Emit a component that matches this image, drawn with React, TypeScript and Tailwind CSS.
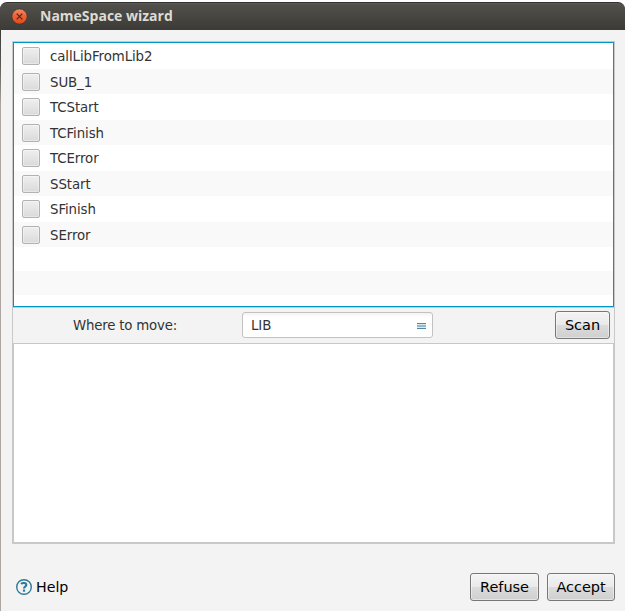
const rows = [
  { label: 'callLibFromLib2', size: 'h-[26px]' },
  { label: 'SUB_1', size: 'h-[25px]' },
  { label: 'TCStart', size: 'h-[26px]' },
  { label: 'TCFinish', size: 'h-[25px]' },
  { label: 'TCError', size: 'h-[26px]' },
  { label: 'SStart', size: 'h-[25px]' },
  { label: 'SFinish', size: 'h-[26px]' },
  { label: 'SError', size: 'h-[25px]' },
];

function PushButton({ label, width }: { label: string; width: string }) {
  return (
    <button
      className={`${width} h-7 shrink-0 rounded-[3px] border border-[#777] bg-[linear-gradient(#f4f4f4,#eaeaea_48%,#dcdcdc_50%,#cfcfcf)] text-center text-[14.5px] leading-[26px] tracking-[-0.05px] text-black shadow-[inset_0_0_0_1px_#ffffff70]`}
    >
      {label}
    </button>
  );
}

export default function App() {
  return (
    <div className="h-[611px] w-[625px] overflow-hidden bg-white pt-[2px] font-['DejaVu_Sans',sans-serif]">
      <div className="flex h-[28px] items-center rounded-t-[7px] border-t border-[#34332f] bg-[linear-gradient(#5b5a53_0,#504f49_2px,#3c3b37)] pl-[11px]">
        <svg width="17" height="17" viewBox="0 0 17 17" className="shrink-0">
          <defs>
            <linearGradient id="close" x1="0" y1="0" x2="0" y2="1">
              <stop offset="0" stopColor="#f58a68" />
              <stop offset="0.45" stopColor="#ee6238" />
              <stop offset="1" stopColor="#df4b1c" />
            </linearGradient>
          </defs>
          <circle cx="8.5" cy="8.5" r="7.6" fill="url(#close)" stroke="#35322d" strokeWidth="0.6" />
          <path d="M5.7 5.7l5.6 5.6M11.3 5.7l-5.6 5.6" stroke="#4a2a1e" strokeWidth="1.2" />
        </svg>
        <h1 className="mb-[2px] ml-3 whitespace-nowrap font-['Open_Sans',sans-serif] text-[14px] leading-5 font-bold text-[#dfdbd2]">
          NameSpace wizard
        </h1>
      </div>
      <div className="flex h-[581px] bg-[#f3f3f3]">
        <div className="w-px shrink-0 bg-[linear-gradient(#3c3b37,#5d5a56_35px,#aba6a1_75px)]" />
        <div className="flex flex-col pt-[11px] pl-[11px]">
          <div className="w-[603px] border border-b-0 border-[#c8c8c8] text-[13.33px] tracking-[-0.08px] text-[#333]">
            <div className="h-[265px] border border-[#0096c9] bg-white shadow-[0_1px_0_#a5d5e7]">
              {rows.map((row, i) => (
                <label
                  key={row.label}
                  className={`${row.size} flex items-center pl-2 ${i % 2 ? 'bg-[#f9f9f9]' : 'bg-white'}`}
                >
                  <span className="size-[18px] rounded-[2px] border border-[#b2b2b2] bg-[linear-gradient(#efefef,#dadada)] shadow-[inset_0_0_0_1px_#ffffff60]" />
                  <span className="ml-[10px] pt-[2px] leading-4">{row.label}</span>
                </label>
              ))}
              <div className="h-6" />
              <div className="h-6 bg-[#f9f9f9]" />
            </div>
            <div className="flex h-9 items-center pr-1 pl-[60px]">
              <span className="w-[169px] pt-px tracking-[-0.2px]">Where to move:</span>
              <div className="flex h-[26px] w-[191px] items-center justify-between rounded-[3px] border border-[#c2c2c2] bg-white bg-[linear-gradient(#f2f2f2,#fff_4px)] pr-[6px] pl-2">
                <span className="pt-px">LIB</span>
                <svg width="9" height="6" viewBox="0 0 9 6" className="mt-[2px]">
                  <path d="M0 0h9v6H0z" fill="#dce9ef" />
                  <path d="M0 .5h9M0 3h9M0 5.5h9" stroke="#5089a6" />
                </svg>
              </div>
              <div className="ml-auto flex">
                <PushButton label="Scan" width="w-[55px]" />
              </div>
            </div>
          </div>
          <textarea
            readOnly
            className="block h-[201px] w-[603px] resize-none border-2 border-t border-[#c8c8c8] bg-white outline-none"
          />
          <div className="mt-[29px] flex h-7 w-[603px] items-center pl-[3px]">
            <svg width="18" height="18" viewBox="0 0 18 18" fill="none" stroke="#2e7b9b">
              <circle cx="9" cy="9" r="7.3" strokeWidth="1.4" />
              <path d="M6.1 6C7.1 4.7 11.3 4.5 11.3 6.9C11.3 8.6 9 8.5 9 10.4" strokeWidth="2.1" />
              <path d="M9 11.5v2.2" strokeWidth="2.2" />
            </svg>
            <span className="ml-[3px] text-[14.2px] leading-5 text-black">Help</span>
            <div className="ml-auto flex gap-2">
              <PushButton label="Refuse" width="w-[69px]" />
              <PushButton label="Accept" width="w-[68px]" />
            </div>
          </div>
        </div>
      </div>
    </div>
  );
}
